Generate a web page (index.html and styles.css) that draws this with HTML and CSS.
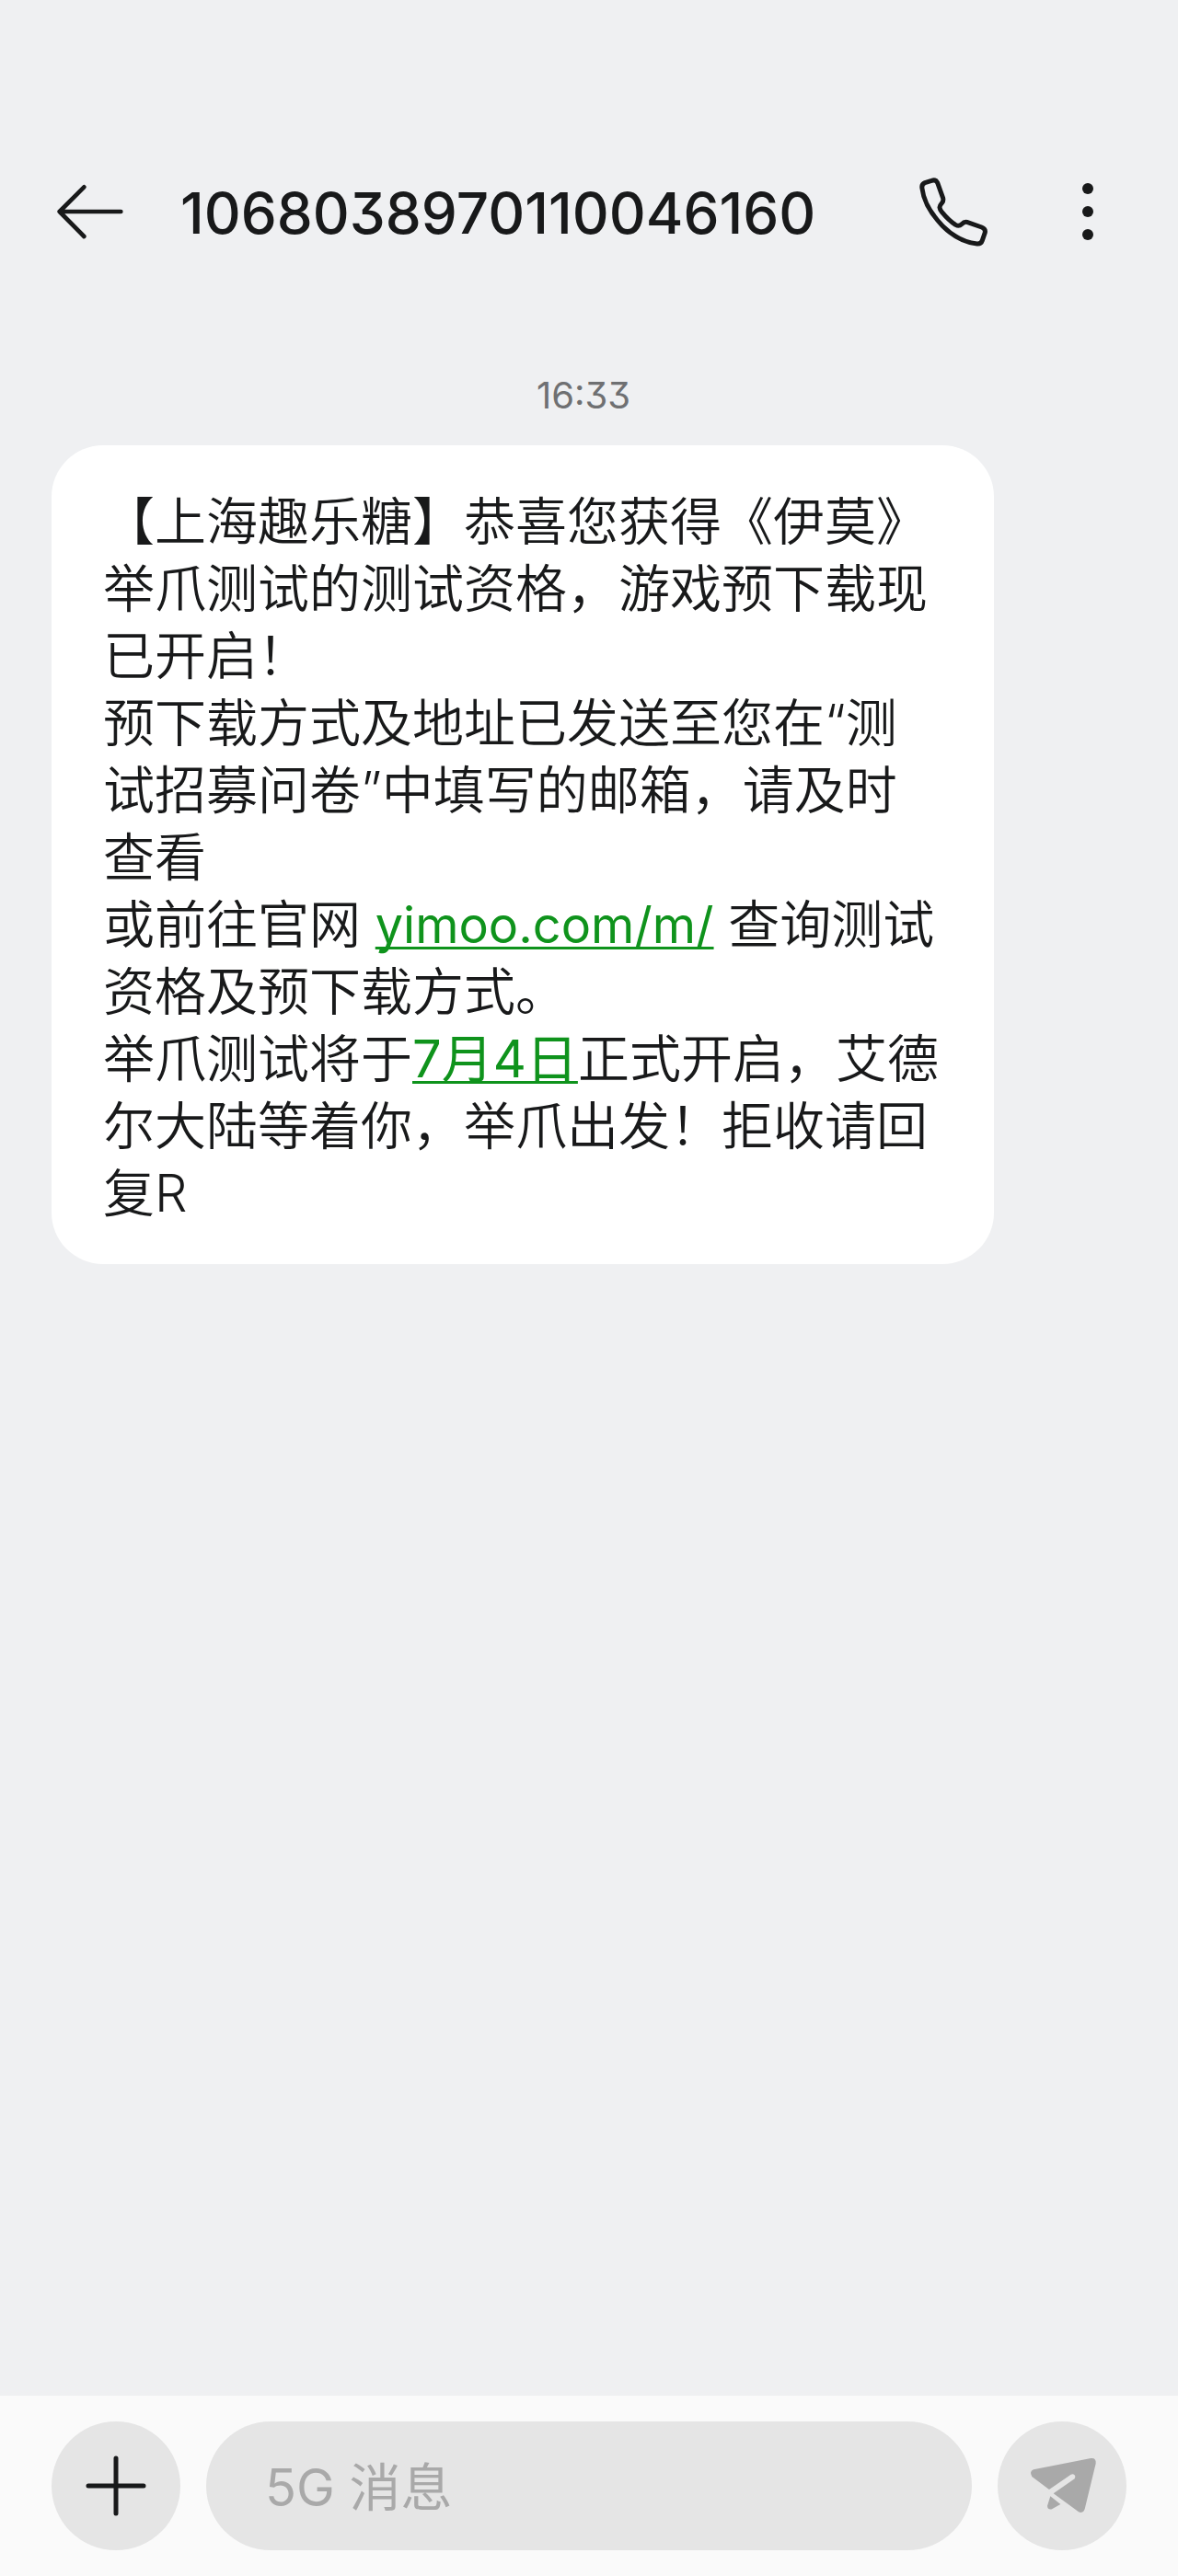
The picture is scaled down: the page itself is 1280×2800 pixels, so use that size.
FILE: index.html
```html
<!DOCTYPE html>
<html lang="zh-CN">
<head>
<meta charset="utf-8">
<meta name="viewport" content="width=device-width, initial-scale=1">
<title>1068038970110046160</title>
<link rel="stylesheet" href="styles.css">
</head>
<body>
<div class="app">
  <header class="header">
    <button class="icon-button back" type="button" aria-label="返回">
      <svg width="72" height="72" viewBox="66 104 216 216" fill="none" stroke="currentColor" stroke-width="14" stroke-linecap="round" stroke-linejoin="round"><path d="M154 132L74 212l80 81M74 212h200"/></svg>
    </button>
    <h1 class="title">1068038970110046160</h1>
    <button class="icon-button" type="button" aria-label="拨打电话">
      <svg width="84" height="84" viewBox="397 87 252 252" fill="none" stroke="currentColor" stroke-width="15" stroke-linejoin="round"><path d="M421 138Q418 124 430 119L452 112Q465 107 471 119L489 169Q491 178 486 184Q478 193 478 199Q479 207 485 214Q508 242 530 256Q541 262 550 254Q558 245 567 247L615 264Q628 269 626 281L617 307Q613 319 600 318Q540 312 488 260Q428 198 421 138Z"/></svg>
    </button>
    <button class="icon-button" type="button" aria-label="更多">
      <svg width="84" height="84" viewBox="0 0 84 84" fill="currentColor"><circle cx="42" cy="17" r="6"/><circle cx="42" cy="42" r="6"/><circle cx="42" cy="67" r="6"/></svg>
    </button>
  </header>
  <main class="thread">
    <time class="time" datetime="16:33">16:33</time>
    <p class="bubble">【上海趣乐糖】恭喜您获得《伊莫》举爪测试的测试资格，游戏预下载现已开启！<br>预下载方式及地址已发送至您在“测试招募问卷”中填写的邮箱，请及时查看<br>或前往官网 <a class="link link-url" href="#site">yimoo.com/m/</a> 查询测试资格及预下载方式。<br>举爪测试将于<a class="link" href="#date">7月4日</a>正式开启，艾德尔大陆等着你，举爪出发！拒收请回复R</p>
  </main>
  <form class="composer">
    <button class="round-button" type="button" aria-label="添加">
      <svg width="140" height="140" viewBox="0 0 140 140" fill="none" stroke="currentColor" stroke-width="5" stroke-linecap="round"><path d="M70 40v60M40 70h60"/></svg>
    </button>
    <input class="message-input" type="text" aria-label="5G 消息" placeholder="5G 消息">
    <button class="round-button send" type="button" aria-label="发送">
      <svg width="140" height="140" viewBox="0 0 420 420">
        <path fill="currentColor" d="M117 157L304 120Q322 118 320 137L284 286Q279 301 264 295L182 235L251 187Q256 181 251 175Q246 170 239 173L168 222L112 180Q102 163 117 157Z"/>
        <path fill="currentColor" d="M172 244L205 270L177 286Q163 289 162 275Z"/>
      </svg>
    </button>
  </form>
</div>
</body>
</html>
```
FILE: styles.css
```css
* {
  box-sizing: border-box;
}

body {
  margin: 0;
  background: #eff0f2;
  color: #18191a;
  font-family: Inter, "Noto Sans CJK SC", sans-serif;
}

button,
input {
  border: 0;
  padding: 0;
  font: inherit;
  color: inherit;
}

svg {
  display: block;
}

.app {
  display: flex;
  flex-direction: column;
  min-height: 100vh;
}

.header {
  display: flex;
  align-items: center;
  gap: 62px;
  padding: 174px 56px 0 62px;
}

.icon-button {
  flex: none;
  background: none;
}

.title {
  flex: 1;
  min-width: 0;
  margin: 0;
  padding-top: 4px;
  font-size: 62px;
  font-weight: 500;
  line-height: 108px;
  font-feature-settings: "cv09";
}

.thread {
  flex: 1;
  display: flex;
  flex-direction: column;
  align-items: flex-start;
  gap: 26px;
  padding: 116px 56px 56px;
}

.time {
  align-self: center;
  padding-right: 12px;
  font-size: 40px;
  line-height: 56px;
  color: #6f7072;
  font-feature-settings: "cv09";
}

.bubble {
  width: 1024px;
  max-width: 100%;
  margin: 0;
  padding: 47px 56px 40px;
  border-radius: 56px;
  background: #fff;
  font-size: 56px;
  font-weight: 350;
  line-height: 73px;
}

.link {
  color: #0f931c;
  font-weight: 400;
  text-decoration-thickness: 3px;
  text-underline-offset: 4px;
  text-decoration-skip-ink: none;
}

.link-url {
  font-size: 54px;
}

.composer {
  display: flex;
  gap: 28px;
  padding: 28px 56px;
  background: #fafafa;
}

.round-button {
  flex: none;
  border-radius: 50%;
  background: #e5e5e5;
}

.send {
  color: #a9a9a9;
}

.message-input {
  flex: 1;
  min-width: 0;
  height: 140px;
  padding: 4px 64px 0;
  border-radius: 70px;
  background: #e5e5e5;
  font-size: 56px;
  font-weight: 400;
}

.message-input::placeholder {
  color: #a9a9a9;
  opacity: 1;
}
```
